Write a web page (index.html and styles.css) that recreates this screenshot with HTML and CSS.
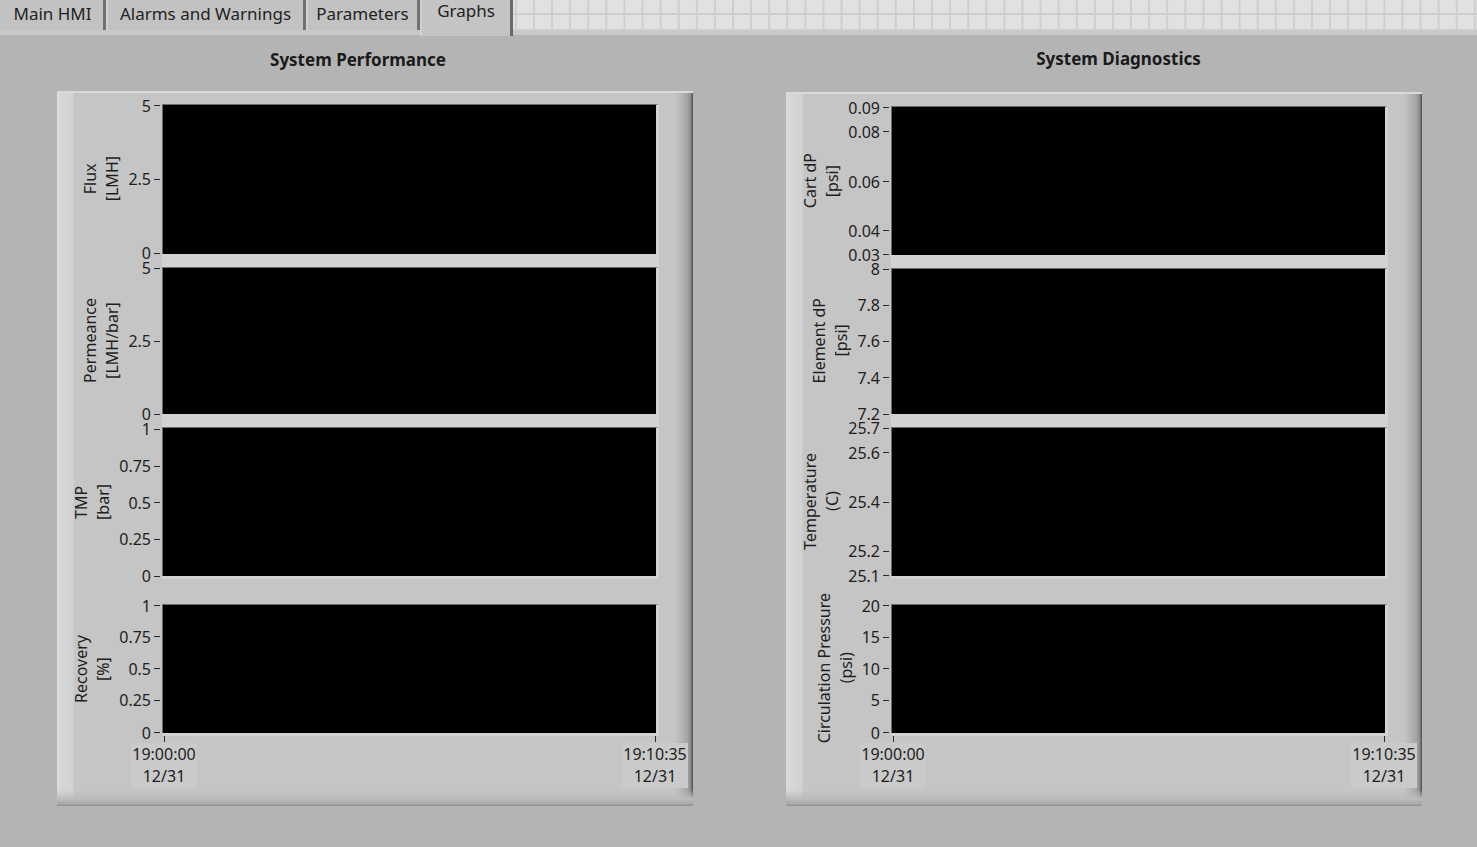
FILE: index.html
```html
<!DOCTYPE html>
<html lang="en">
<head>
<meta charset="utf-8">
<title>Graphs</title>
<link rel="stylesheet" href="styles.css">
</head>
<body>
<div class="tabbar">
  <div class="tab t1">Main HMI</div>
  <div class="tab t2">Alarms and Warnings</div>
  <div class="tab t3">Parameters</div>
  <div class="tab t4 active">Graphs</div>
  <div class="tabgrid"></div>
</div>

<main class="content">
  <section class="col col-l">
    <h2 class="title">System Performance</h2>
    <div class="frame frame-l">
      <div class="stack stack-l">
        <div class="axis g1">
          <div class="name">Flux<br>[LMH]</div>
          <div class="ticks"><span class="sizer">2.5</span>
            <div class="tick" style="top:1.5px"><span>5</span><i class="dash"></i></div>
            <div class="tick" style="top:75px"><span>2.5</span><i class="dash"></i></div>
            <div class="tick" style="top:149px"><span>0</span><i class="dash"></i></div>
          </div>
        </div>
        <div class="plot g1"></div>
        <div class="band g2"></div>

        <div class="axis g3">
          <div class="name">Permeance<br>[LMH/bar]</div>
          <div class="ticks"><span class="sizer">2.5</span>
            <div class="tick" style="top:1px"><span>5</span><i class="dash"></i></div>
            <div class="tick" style="top:74px"><span>2.5</span><i class="dash"></i></div>
            <div class="tick" style="top:147px"><span>0</span><i class="dash"></i></div>
          </div>
        </div>
        <div class="plot g3"></div>
        <div class="band g4"></div>

        <div class="axis g5">
          <div class="name">TMP<br>[bar]</div>
          <div class="ticks"><span class="sizer">0.75</span>
            <div class="tick" style="top:2px"><span>1</span><i class="dash"></i></div>
            <div class="tick" style="top:39px"><span>0.75</span><i class="dash"></i></div>
            <div class="tick" style="top:75.5px"><span>0.5</span><i class="dash"></i></div>
            <div class="tick" style="top:112px"><span>0.25</span><i class="dash"></i></div>
            <div class="tick" style="top:149px"><span>0</span><i class="dash"></i></div>
          </div>
        </div>
        <div class="plot g5"></div>
        <div class="band g6"></div>

        <div class="axis g8">
          <div class="name">Recovery<br>[%]</div>
          <div class="ticks"><span class="sizer">0.75</span>
            <div class="tick" style="top:1.5px"><span>1</span><i class="dash"></i></div>
            <div class="tick" style="top:32.5px"><span>0.75</span><i class="dash"></i></div>
            <div class="tick" style="top:64.5px"><span>0.5</span><i class="dash"></i></div>
            <div class="tick" style="top:96px"><span>0.25</span><i class="dash"></i></div>
            <div class="tick" style="top:128.5px"><span>0</span><i class="dash"></i></div>
          </div>
        </div>
        <div class="plot g8"></div>
        <div class="band g9"></div>

        <div class="xaxis g10">
          <div class="xg"><i class="xt"></i><div class="xl">19:00:00<br>12/31</div></div>
          <div class="xg"><i class="xt"></i><div class="xl">19:10:35<br>12/31</div></div>
        </div>
      </div>
    </div>
  </section>

  <section class="col col-r">
    <h2 class="title">System Diagnostics</h2>
    <div class="frame frame-r">
      <div class="stack stack-r">
        <div class="axis g1">
          <div class="name">Cart dP<br>[psi]</div>
          <div class="ticks"><span class="sizer">0.09</span>
            <div class="tick" style="top:1.5px"><span>0.09</span><i class="dash"></i></div>
            <div class="tick" style="top:25.5px"><span>0.08</span><i class="dash"></i></div>
            <div class="tick" style="top:75.5px"><span>0.06</span><i class="dash"></i></div>
            <div class="tick" style="top:124.5px"><span>0.04</span><i class="dash"></i></div>
            <div class="tick" style="top:148.5px"><span>0.03</span><i class="dash"></i></div>
          </div>
        </div>
        <div class="plot g1"></div>
        <div class="band g2"></div>

        <div class="axis g3">
          <div class="name">Element dP<br>[psi]</div>
          <div class="ticks"><span class="sizer">7.8</span>
            <div class="tick" style="top:1px"><span>8</span><i class="dash"></i></div>
            <div class="tick" style="top:37px"><span>7.8</span><i class="dash"></i></div>
            <div class="tick" style="top:73px"><span>7.6</span><i class="dash"></i></div>
            <div class="tick" style="top:109.5px"><span>7.4</span><i class="dash"></i></div>
            <div class="tick" style="top:146px"><span>7.2</span><i class="dash"></i></div>
          </div>
        </div>
        <div class="plot g3"></div>
        <div class="band g4"></div>

        <div class="axis g5">
          <div class="name">Temperature<br>(C)</div>
          <div class="ticks"><span class="sizer">25.4</span>
            <div class="tick" style="top:1px"><span>25.7</span><i class="dash"></i></div>
            <div class="tick" style="top:25.5px"><span>25.6</span><i class="dash"></i></div>
            <div class="tick" style="top:75px"><span>25.4</span><i class="dash"></i></div>
            <div class="tick" style="top:124px"><span>25.2</span><i class="dash"></i></div>
            <div class="tick" style="top:148.5px"><span>25.1</span><i class="dash"></i></div>
          </div>
        </div>
        <div class="plot g5"></div>
        <div class="band g6"></div>

        <div class="axis g8">
          <div class="name">Circulation Pressure<br>(psi)</div>
          <div class="ticks"><span class="sizer">20</span>
            <div class="tick" style="top:1.5px"><span>20</span><i class="dash"></i></div>
            <div class="tick" style="top:33px"><span>15</span><i class="dash"></i></div>
            <div class="tick" style="top:64.5px"><span>10</span><i class="dash"></i></div>
            <div class="tick" style="top:96px"><span>5</span><i class="dash"></i></div>
            <div class="tick" style="top:128.5px"><span>0</span><i class="dash"></i></div>
          </div>
        </div>
        <div class="plot g8"></div>
        <div class="band g9"></div>

        <div class="xaxis g10">
          <div class="xg"><i class="xt"></i><div class="xl">19:00:00<br>12/31</div></div>
          <div class="xg"><i class="xt"></i><div class="xl">19:10:35<br>12/31</div></div>
        </div>
      </div>
    </div>
  </section>
</main>
</body>
</html>
```

FILE: styles.css
```css
html, body {
  margin: 0;
  padding: 0;
}

body {
  background: #b4b4b4;
  font-family: "Noto Sans", "Open Sans", sans-serif;
  font-size: 16px;
  color: #1e1e1e;
  width: 1477px;
  height: 847px;
  overflow: hidden;
}

/* ---------- tab bar ---------- */
.tabbar {
  display: flex;
  align-items: flex-start;
  height: 35px;
  background: #c8c8c8;
}

.tab {
  box-sizing: border-box;
  height: 30px;
  background: #c2c2c2;
  border-left: 2px solid #d0d0d0;
  border-right: 3px solid #707070;
  font-size: 17px;
  line-height: 28px;
  text-align: center;
  white-space: nowrap;
  color: #222;
}

.t1 { width: 106px; border-left-color: #c2c2c2; }
.t2 { width: 200px; }
.t3 { width: 114px; }
.t4 { width: 93px; }

.tab.active {
  height: 36px;
  background: #c4c4c4;
  line-height: 22px;
  border-right-color: #6a6a6a;
}

.tabgrid {
  flex: 1;
  height: 31px;
  background-color: #e1e1e1;
  background-image:
    linear-gradient(to right, #cecece 0, #cecece 2px, transparent 2px),
    linear-gradient(to bottom, transparent 13px, #cecece 13px, #cecece 15px, transparent 15px, transparent 29px, #cecece 29px);
  background-size: 18.1px 100%, 100% 100%;
  background-position: 20px 0, 0 0;
}

/* ---------- content ---------- */
.content {
  display: flex;
  gap: 93px;
  padding-left: 57px;
}

.col {
  display: flex;
  flex-direction: column;
  width: 636px;
}

.col-l { padding-top: 15px; }
.col-r { padding-top: 14px; }

.title {
  margin: 0;
  font-size: 17px;
  line-height: 20px;
  font-weight: 700;
  text-align: center;
  color: #1a1a1a;
}

.col-l .title { padding-right: 34px; margin-bottom: 21px; }
.col-r .title { padding-left: 29px; margin-bottom: 23px; }

/* ---------- raised frame ---------- */
.frame {
  box-sizing: border-box;
  width: 636px;
  border-top: 2px solid #dadada;
  background:
    linear-gradient(to top, #8e8e8e 0, #a8a8a8 2px, #bcbcbc 7px, rgba(197,197,197,0) 16px),
    linear-gradient(to right, #dcdcdc 0, #d7d7d7 3px, #d3d3d3 15px, #c5c5c5 18px, #c5c5c5 calc(100% - 18px), #a6a6a6 calc(100% - 6px), #8a8a8a calc(100% - 2px), #5a5a5a calc(100% - 1px));
}

.frame-l { height: 715px; padding-top: 11px; }
.frame-r { height: 714px; padding-top: 12px; }

/* ---------- stacked graphs ---------- */
.stack {
  display: grid;
  grid-template-columns: 105px 497px;
}

.stack-l { grid-template-rows: 150px 13px 147px 13px 149px 3px 25px 129px 3px auto; }
.stack-r { grid-template-rows: 149px 13px 146px 13px 149px 3px 25px 129px 3px auto; }

.g1 { grid-row: 1; }
.g2 { grid-row: 2; }
.g3 { grid-row: 3; }
.g4 { grid-row: 4; }
.g5 { grid-row: 5; }
.g6 { grid-row: 6; }
.g8 { grid-row: 8; }
.g9 { grid-row: 9; }
.g10 { grid-row: 10; }

.axis {
  grid-column: 1;
  display: flex;
  justify-content: flex-end;
  align-items: center;
}

.plot, .band, .xaxis { grid-column: 2; }

.plot {
  box-sizing: border-box;
  background: #000;
  border-top: 1px solid #6c6c6c;
  border-left: 1px solid #6c6c6c;
  border-right: 3px solid #d2d2d2;
}

.band { background: #d2d2d2; }

.name {
  writing-mode: vertical-rl;
  transform: rotate(180deg);
  text-align: center;
  line-height: 22px;
  white-space: nowrap;
  margin-right: 5px;
}

.ticks {
  position: relative;
  align-self: stretch;
  padding-right: 11px;
}

.sizer {
  display: block;
  height: 0;
  overflow: hidden;
  visibility: hidden;
  white-space: nowrap;
}

.tick {
  position: absolute;
  right: 2px;
  height: 0;
  display: flex;
  align-items: center;
  gap: 3px;
  white-space: nowrap;
  line-height: 20px;
}

.dash {
  display: block;
  width: 6px;
  height: 1px;
  background: #2a2a2a;
}

/* ---------- x axis ---------- */
.xaxis {
  display: flex;
  justify-content: space-between;
  margin: 0 -29px 0 -31px;
}

.xg {
  width: 66px;
  display: flex;
  flex-direction: column;
  align-items: center;
}

.xt {
  display: block;
  width: 1px;
  height: 6px;
  background: #2a2a2a;
}

.xl {
  box-sizing: border-box;
  width: 100%;
  margin-top: 1px;
  padding-bottom: 1px;
  background: #cacaca;
  text-align: center;
  line-height: 22px;
}
```
